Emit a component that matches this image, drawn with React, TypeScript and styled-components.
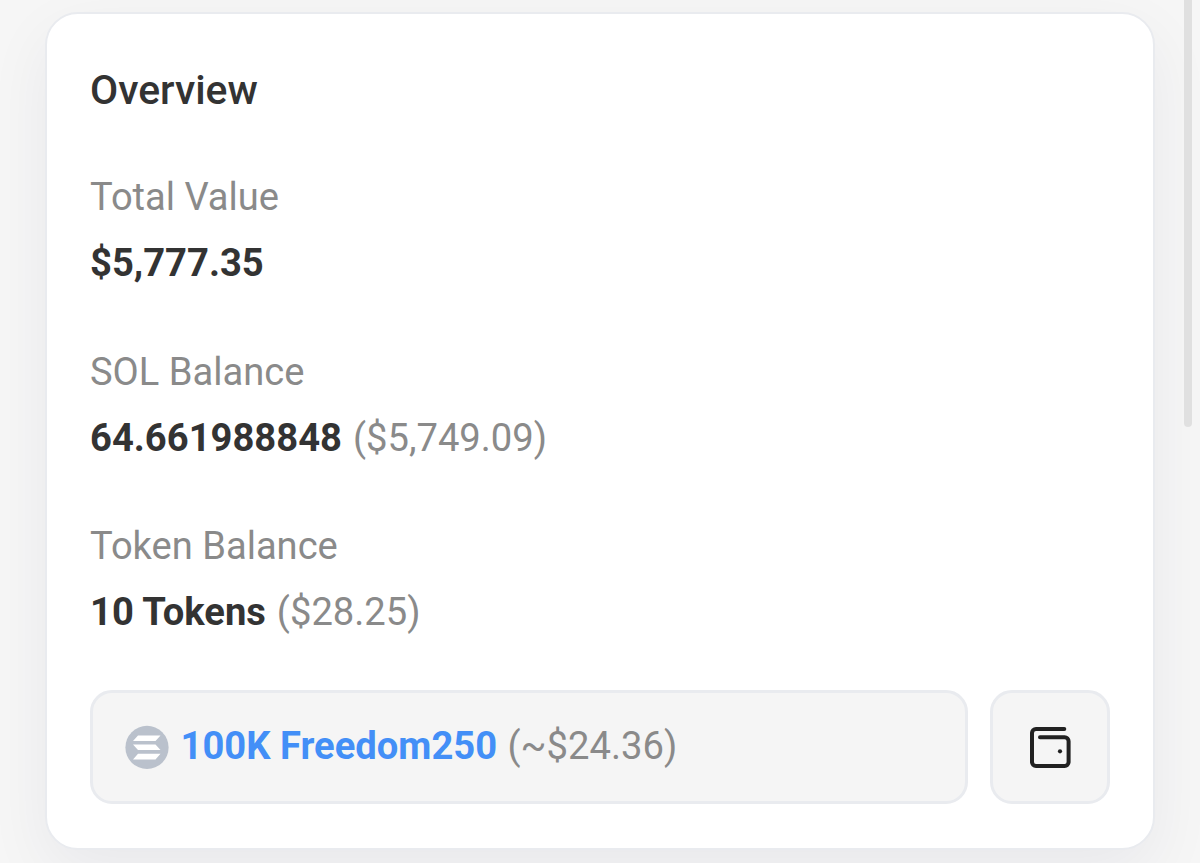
import React from "react";
import styled, { createGlobalStyle } from "styled-components";

const Global = createGlobalStyle`
  *{box-sizing:border-box}
  html,body{margin:0;height:863px;overflow:hidden;background:#f6f6f6}
  body{font-family:Roboto,"Liberation Sans",sans-serif}
`;
const Page = styled.main`
  height:863px;padding:12px 45px 0;position:relative;
`;
const Card = styled.section`
  height:838px;background:#fff;border:2px solid #e9ebef;border-radius:33px;padding:48px 43px 0;
  box-shadow:0 22px 65px rgba(20,25,60,.06);
`;
const Title = styled.h1`
  margin:0 0 57px;font-size:40.9px;line-height:56px;font-weight:500;color:#333;
`;
const Stats = styled.div`
  display:flex;flex-direction:column;gap:64.5px;margin-bottom:56px;
`;
const Stat = styled.div`
  display:flex;flex-direction:column;gap:22px;
`;
const Label = styled.div`
  font-size:38.1px;line-height:44px;color:#8a8a8a;
`;
const Value = styled.div`
  font-size:38.18px;line-height:44px;color:#8a8a8a;white-space:pre;
`;
const Strong = styled.b`
  font-weight:700;color:#333;margin-right:1.5px;
`;
const Row = styled.div`
  display:flex;gap:22px;
`;
const Token = styled.div`
  flex:1;height:114px;border:3px solid #e9ebef;border-radius:22px;background:#f5f5f5;
  display:flex;align-items:center;gap:11.5px;padding-left:32px;
`;
const TokenText = styled.span`
  font-size:38.18px;line-height:44px;padding-bottom:2px;color:#8a8a8a;white-space:pre;
`;
const Link = styled.a`
  color:#438ff7;font-weight:700;margin-right:1px;
`;
const WalletButton = styled.button`
  width:120px;height:114px;border:3px solid #e9ebef;border-radius:22px;background:#f5f5f5;padding:0;
  display:flex;align-items:center;justify-content:center;
`;
const Scrollbar = styled.div`
  position:absolute;right:8px;top:-10px;width:8px;height:437px;border-radius:4px;background:#e0e0e0;
`;

export default function App() {
  return (
    <Page>
      <Global />
      <Card>
        <Title>Overview</Title>
        <Stats>
          <Stat><Label>Total Value</Label><Value><Strong>$5,777.35</Strong></Value></Stat>
          <Stat><Label>SOL Balance</Label><Value><Strong>64.661988848</Strong> ($5,749.09)</Value></Stat>
          <Stat><Label>Token Balance</Label><Value><Strong>10 Tokens</Strong> ($28.25)</Value></Stat>
        </Stats>
        <Row>
          <Token>
            <svg width="44" height="44" viewBox="0 0 44 44">
              <circle cx="22" cy="22.4" r="21.6" fill="#bac1cc" />
              <path d="M13 10.4H35.5L30.5 16.1H8ZM8 19.4H30.5L35.5 24.9H13ZM13 28.7H35.5L30.5 34.4H8Z" fill="#fff" />
            </svg>
            <TokenText><Link>100K Freedom250</Link> (~$24.36)</TokenText>
          </Token>
          <WalletButton aria-label="Wallet">
            <svg width="44" height="44" viewBox="0 0 44 44" fill="none" stroke="#212121" strokeWidth="4" strokeLinecap="round" strokeLinejoin="round">
              <path d="M36.3 4H8a4 4 0 0 0-4 4v29a4 4 0 0 0 4 4h28.6a4 4 0 0 0 4-4V16.3a4 4 0 0 0-4-4H12" />
              <circle cx="32" cy="26.3" r="2.1" fill="#212121" stroke="none" />
            </svg>
          </WalletButton>
        </Row>
      </Card>
      <Scrollbar />
    </Page>
  );
}
